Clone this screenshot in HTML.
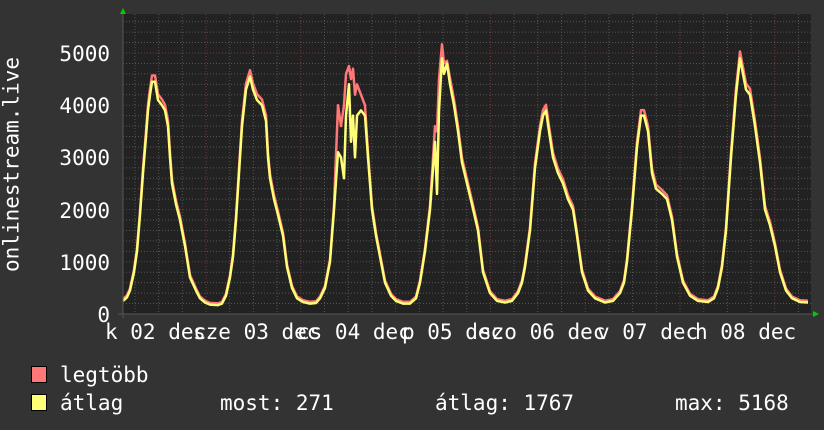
<!DOCTYPE html>
<html><head><meta charset="utf-8"><style>
html,body{margin:0;padding:0;background:#333;}
body{width:824px;height:430px;position:relative;overflow:hidden;font-family:"DejaVu Sans Mono","Liberation Mono",monospace;color:#fff;font-size:21px;}
.t{position:absolute;white-space:pre;line-height:1;}
.yl{position:absolute;right:714px;line-height:1;}
.sq{position:absolute;left:31px;width:14px;height:15px;border:1px solid #000;}
</style></head><body>
<svg width="824" height="430" style="position:absolute;left:0;top:0">
<rect x="123" y="14" width="688" height="300" fill="#222"/>
<g id="grid"></g>
<polyline id="red" fill="none" stroke="#ff7777" stroke-width="2.5" stroke-linejoin="round"/>
<polyline id="yel" fill="none" stroke="#ffff77" stroke-width="2.5" stroke-linejoin="round"/>
<line x1="118" y1="314" x2="814" y2="314" stroke="#555" stroke-width="1"/>
<line x1="123" y1="12" x2="123" y2="318" stroke="#555" stroke-width="1"/>
<polygon points="120,14 126,14 123,8" fill="#0c0"/>
<polygon points="813,311 813,317 819,314" fill="#0c0"/>
</svg>
<script>
var g=document.getElementById('grid'),s='';
function Y(v){return 314-v*0.0522;}
for(var v=200;v<=5600;v+=200){var y=Y(v);var maj=v%1000==0;s+='<line x1="123" x2="811" y1="'+y+'" y2="'+y+'" stroke="'+(maj?'#7a3a3a':'#555')+'" stroke-dasharray="1,2"/>';}
for(var x=206-3*23.7;x<811;x+=23.7){var m=Math.abs(((x-206)/94.8)-Math.round((x-206)/94.8))<0.01;s+='<line y1="14" y2="314" x1="'+x+'" x2="'+x+'" stroke="'+(m?'#7a3a3a':'#555')+'" stroke-dasharray="1,2"/>';}
g.innerHTML=s;
var d=[123,250,127,320,130,450,134,800,137,1200,140,1900,143,2700,146,3400,148,3900,150,4200,152,4450,155,4450,158,4100,162,4000,165,3900,168,3600,170,3000,172,2500,176,2100,180,1800,185,1300,190,700,196,450,200,300,205,220,210,180,218,170,222,200,226,350,230,700,233,1100,236,1800,239,2700,242,3600,246,4300,250,4550,253,4300,257,4100,262,4000,266,3700,268,3000,270,2600,274,2200,278,1900,283,1500,287,900,292,500,297,300,303,230,310,200,316,210,320,300,325,500,330,1000,334,2000,338,3100,341,3000,344,2600,346,3800,349,4400,351,3300,353,3800,355,3000,357,3800,361,3900,365,3800,368,3000,372,2000,376,1500,380,1100,385,600,391,350,396,250,403,200,410,200,416,300,420,600,425,1200,430,2000,435,3300,437,2300,439,3900,442,4900,444,4600,447,4800,450,4400,454,4000,458,3500,462,2900,467,2500,472,2100,478,1600,483,800,490,400,497,250,505,220,512,250,518,400,522,600,525,900,530,1600,535,2800,540,3500,543,3800,546,3900,549,3500,553,3000,558,2700,563,2500,568,2200,573,2000,577,1500,582,800,588,450,595,300,605,220,613,250,620,400,624,600,627,1000,632,2000,637,3200,641,3800,644,3800,648,3500,652,2700,656,2400,662,2300,667,2200,672,1800,677,1100,683,600,690,350,698,250,708,230,714,300,718,500,722,900,726,1600,731,3000,736,4200,740,4900,743,4600,746,4300,750,4200,755,3600,760,2900,765,2000,770,1700,775,1300,780,800,786,450,792,300,800,230,808,220];
var yp='',rp='';
var over={338:4000,341:3600,344:4000,346:4600,349:4750,351:4500,353:4700,355:4200,357:4400,361:4200,365:4000,435:3600,437:3500,439:4500,442:5168,444:4800,447:4850};
for(var i=0;i<d.length;i+=2){var x=d[i],v=d[i+1];yp+=x+','+Y(v).toFixed(1)+' ';var rv=over[x]||v*1.02+30;rp+=x+','+Y(rv).toFixed(1)+' ';}
document.getElementById('yel').setAttribute('points',yp);
document.getElementById('red').setAttribute('points',rp);
</script>
<div class="yl" style="top:44px">5000</div>
<div class="yl" style="top:96px">4000</div>
<div class="yl" style="top:148px">3000</div>
<div class="yl" style="top:201px">2000</div>
<div class="yl" style="top:253px">1000</div>
<div class="yl" style="top:305px">0</div>
<div class="t" style="left:-98px;top:154px;width:220px;text-align:center;transform:rotate(-90deg);transform-origin:center;">onlinestream.live</div>
<div class="t" style="left:105px;top:322px">k 02 dec</div>
<div class="t" style="left:193px;top:322px">sze 03 dec</div>
<div class="t" style="left:297px;top:322px">cs 04 dec</div>
<div class="t" style="left:402px;top:322px">p 05 dec</div>
<div class="t" style="left:479px;top:322px">szo 06 dec</div>
<div class="t" style="left:597px;top:322px">v 07 dec</div>
<div class="t" style="left:695px;top:322px">h 08 dec</div>
<div class="sq" style="top:366px;background:#ff7777"></div>
<div class="sq" style="top:394px;background:#ffff77"></div>
<div class="t" style="left:60px;top:365px">legtöbb</div>
<div class="t" style="left:60px;top:393px">átlag</div>
<div class="t" style="left:220px;top:393px">most: 271</div>
<div class="t" style="left:435px;top:393px">átlag: 1767</div>
<div class="t" style="left:675px;top:393px">max: 5168</div>
</body></html>
